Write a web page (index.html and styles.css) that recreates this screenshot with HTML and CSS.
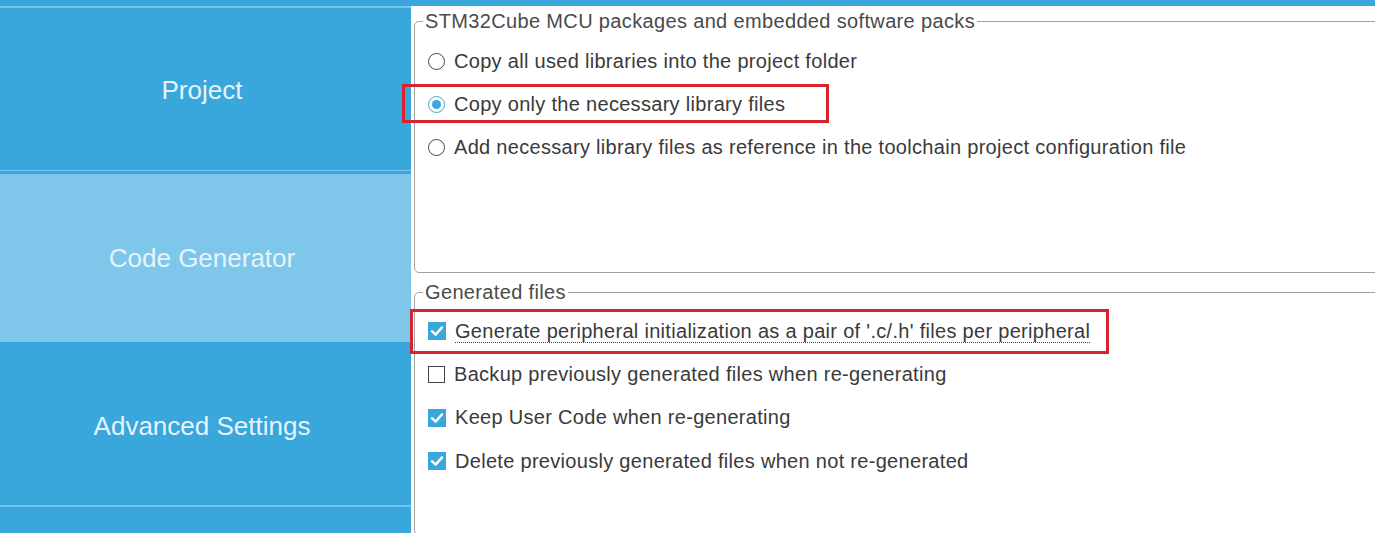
FILE: index.html
```html
<!DOCTYPE html>
<html>
<head>
<meta charset="utf-8">
<link rel="stylesheet" href="styles.css">
</head>
<body>
<div class="app">
  <div class="topbar"></div>
  <div class="main">
    <nav class="sidebar">
      <div class="nav-item first">Project</div>
      <div class="nav-item active">Code Generator</div>
      <div class="nav-item last">Advanced Settings</div>
    </nav>
    <section class="content">
      <fieldset class="group group-packs">
        <legend>STM32Cube MCU packages and embedded software packs</legend>
        <div class="row">
          <span class="radio"></span>
          <span class="label">Copy all used libraries into the project folder</span>
        </div>
        <div class="row">
          <span class="radio checked"></span>
          <span class="label">Copy only the necessary library files</span>
          <span class="mark mark-1"></span>
        </div>
        <div class="row">
          <span class="radio"></span>
          <span class="label">Add necessary library files as reference in the toolchain project configuration file</span>
        </div>
      </fieldset>
      <fieldset class="group group-files">
        <legend>Generated files</legend>
        <div class="row">
          <span class="check checked"><svg viewBox="0 0 18 18"><path d="M4 9.2 L7.6 12.6 L14 5.4" /></svg></span>
          <span class="label dotted">Generate peripheral initialization as a pair of '.c/.h' files per peripheral</span>
          <span class="mark mark-2"></span>
        </div>
        <div class="row">
          <span class="check"></span>
          <span class="label">Backup previously generated files when re-generating</span>
        </div>
        <div class="row">
          <span class="check checked"><svg viewBox="0 0 18 18"><path d="M4 9.2 L7.6 12.6 L14 5.4" /></svg></span>
          <span class="label">Keep User Code when re-generating</span>
        </div>
        <div class="row">
          <span class="check checked"><svg viewBox="0 0 18 18"><path d="M4 9.2 L7.6 12.6 L14 5.4" /></svg></span>
          <span class="label">Delete previously generated files when not re-generated</span>
        </div>
      </fieldset>
    </section>
  </div>
</div>
</body>
</html>
```

FILE: styles.css
```css
html, body {
  margin: 0;
  padding: 0;
  height: 100%;
  overflow: hidden;
  background: #ffffff;
  font-family: "Liberation Sans", Arial, sans-serif;
}

.app {
  display: flex;
  flex-direction: column;
  height: 533px;
  overflow: hidden;
}

.topbar {
  height: 6px;
  background: #39a6dc;
  flex: none;
}

.main {
  display: flex;
  flex: 1;
  min-height: 0;
}

.sidebar {
  width: 411px;
  flex: none;
  background: #39a6dc;
  display: flex;
  flex-direction: column;
}

.nav-item {
  display: flex;
  align-items: center;
  justify-content: center;
  color: #e6f3fb;
  font-size: 26px;
  box-sizing: border-box;
  padding-right: 7px;
}

.nav-item.first {
  height: 165px;
  border-top: 2px solid #74c4ee;
  border-bottom: 1px solid #74c4ee;
  margin-bottom: 3px;
  padding-top: 2px;
}

.nav-item.active {
  height: 168px;
  background: #7ec6ea;
}

.nav-item.last {
  height: 165px;
  border-bottom: 2px solid #74c4ee;
  padding-top: 6px;
}

.content {
  flex: 1;
  min-width: 0;
  padding-left: 3px;
  position: relative;
}

.group {
  margin: 0 -20px 0 0;
  border: 1px solid #a3a3a3;
  border-radius: 5px;
  padding: 0 0 0 8px;
  position: relative;
  box-sizing: border-box;
}

.group legend {
  padding: 0 2px 0 2px;
  font-size: 20px;
  letter-spacing: 0.35px;
  color: #4a4a4a;
  line-height: 23px;
}

.group-packs {
  margin-top: 4px;
  height: 263px;
  padding-top: 7px;
}

.group-files {
  margin-top: 8px;
  height: 254px;
  padding-top: 5px;
}

.row {
  position: relative;
  height: 43px;
  display: flex;
  align-items: center;
  gap: 9px;
  padding-left: 5px;
}

.group-files .row {
  height: 43.5px;
}

.label {
  font-size: 20px;
  letter-spacing: 0.3px;
  color: #3a3a3a;
  white-space: nowrap;
}

.label.dotted {
  border-bottom: 1px dotted #444;
  line-height: 21px;
  margin-top: 3px;
}

.radio {
  width: 15px;
  height: 15px;
  border: 1.5px solid #444;
  border-radius: 50%;
  box-sizing: content-box;
  display: inline-flex;
  align-items: center;
  justify-content: center;
  background: #fff;
  flex: none;
}

.radio.checked {
  border-color: #39a6dc;
}

.radio.checked::after {
  content: "";
  width: 9px;
  height: 9px;
  border-radius: 50%;
  background: #39a6dc;
}

.check {
  width: 15px;
  height: 15px;
  border: 1.5px solid #444;
  box-sizing: content-box;
  background: #fff;
  flex: none;
  display: inline-flex;
}

.check.checked {
  width: 18px;
  height: 18px;
  border: none;
  background: #39a6dc;
}

.check svg {
  width: 18px;
  height: 18px;
}

.check svg path {
  fill: none;
  stroke: #ffffff;
  stroke-width: 2.4;
  stroke-linecap: round;
  stroke-linejoin: round;
}

.mark {
  position: absolute;
  border: 3px solid #d8222e;
  box-sizing: border-box;
  pointer-events: none;
  z-index: 2;
}

.mark-1 {
  left: -21px;
  top: 1px;
  width: 427px;
  height: 39px;
}

.mark-2 {
  left: -13px;
  top: 0px;
  width: 699px;
  height: 45px;
}
```
